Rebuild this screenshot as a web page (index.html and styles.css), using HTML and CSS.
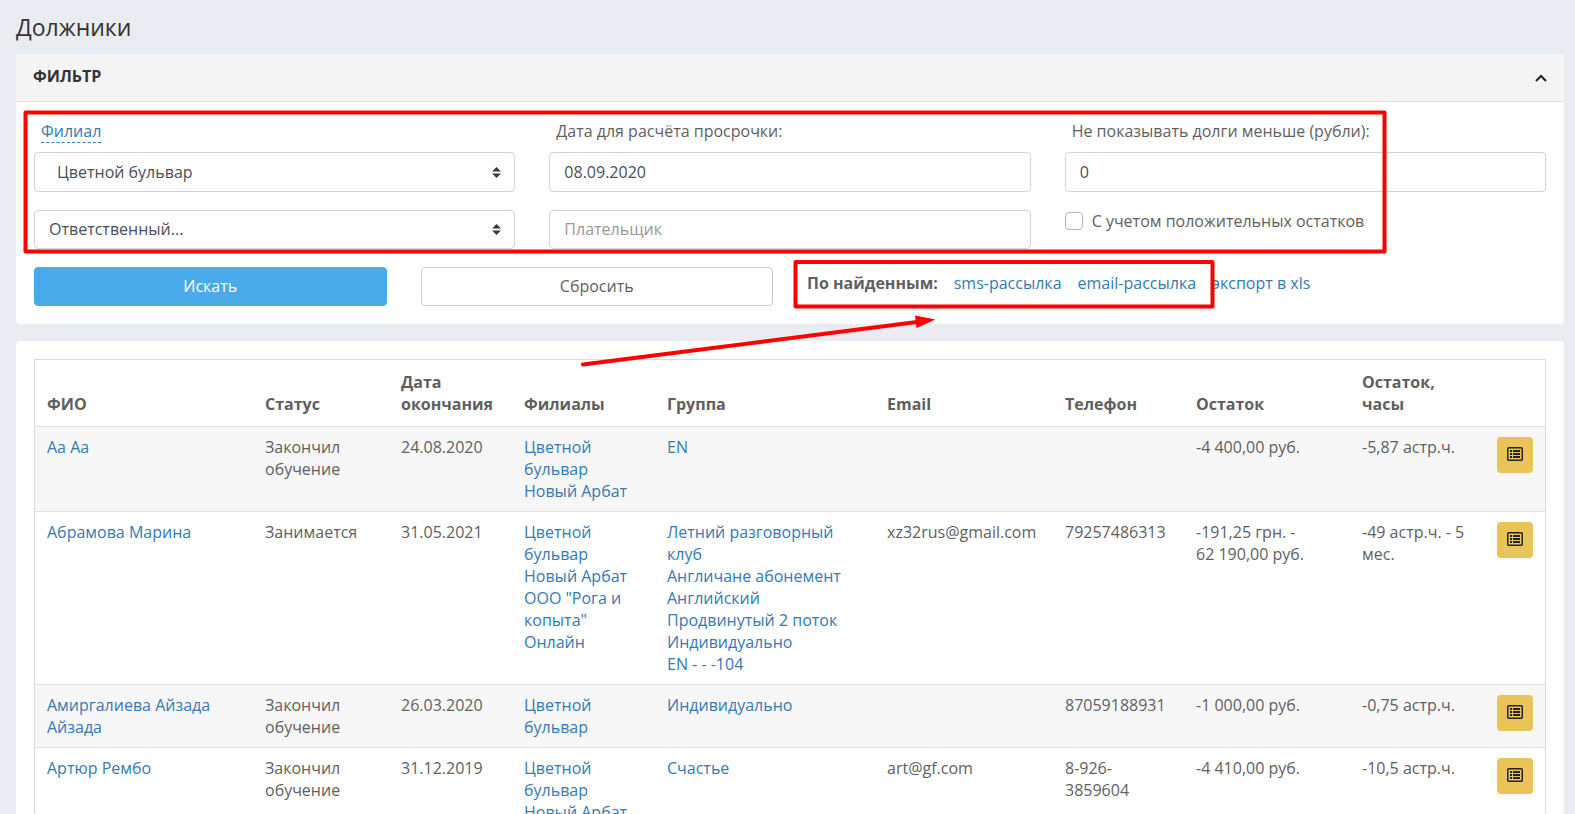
FILE: index.html
```html
<!DOCTYPE html>
<html lang="ru">
<head>
    <meta charset="UTF-8">
    <meta name="viewport" content="width=device-width, initial-scale=1.0">
    <title>Должники</title>
    <link rel="stylesheet" href="styles.css">
</head>
<body>
    <svg class="icon-defs" aria-hidden="true">
        <symbol id="icon-list" viewBox="0 0 16 14">
            <rect x="0.75" y="0.75" width="14.5" height="12.5" rx="1" fill="none" stroke="currentColor" stroke-width="1.5"/>
            <path fill="currentColor" d="M3 3h2v2H3zM6 3h7v2H6zM3 6h2v2H3zM6 6h7v2H6zM3 9h2v2H3zM6 9h7v2H6z"/>
        </symbol>
    </svg>

    <main class="page">
        <h1 class="page-title">Должники</h1>

        <!-- Фильтр -->
        <section class="card">
            <header class="card-header">
                <h2 class="card-title">Фильтр</h2>
                <button type="button" class="collapse-btn" aria-label="Свернуть">
                    <svg width="12" height="8" viewBox="0 0 12 8"><path d="M1 7l5-5 5 5" fill="none" stroke="currentColor" stroke-width="2"/></svg>
                </button>
            </header>
            <form class="filter">
                <div class="filter-fields">
                    <div class="field">
                        <label for="branch"><a href="#" class="dashed">Филиал</a></label>
                        <select id="branch" class="control select select-indent">
                            <option>Цветной бульвар</option>
                        </select>
                    </div>
                    <div class="field">
                        <label for="date">Дата для расчёта просрочки:</label>
                        <input type="text" id="date" class="control" value="08.09.2020">
                    </div>
                    <div class="field">
                        <label for="min-debt">Не показывать долги меньше (рубли):</label>
                        <input type="text" id="min-debt" class="control" value="0">
                    </div>
                    <select class="control control-low select" aria-label="Ответственный">
                        <option>Ответственный...</option>
                    </select>
                    <input type="text" class="control control-low" placeholder="Плательщик" aria-label="Плательщик">
                    <label class="check">
                        <input type="checkbox" class="check-box">
                        С учетом положительных остатков
                    </label>
                </div>
                <div class="filter-actions">
                    <button type="submit" class="btn btn-primary">Искать</button>
                    <button type="reset" class="btn">Сбросить</button>
                    <div class="found">
                        <b>По найденным:</b>
                        <a href="#">sms-рассылка</a>
                        <a href="#">email-рассылка</a>
                        <a href="#">экспорт в xls</a>
                    </div>
                </div>
            </form>
        </section>

        <!-- Список должников -->
        <section class="card card-table">
            <table class="debtors">
                <colgroup>
                    <col class="col-name">
                    <col class="col-status">
                    <col class="col-date">
                    <col class="col-branch">
                    <col class="col-group">
                    <col class="col-email">
                    <col class="col-phone">
                    <col class="col-balance">
                    <col class="col-hours">
                    <col class="col-action">
                </colgroup>
                <thead>
                    <tr>
                        <th>ФИО</th>
                        <th>Статус</th>
                        <th>Дата окончания</th>
                        <th>Филиалы</th>
                        <th>Группа</th>
                        <th>Email</th>
                        <th>Телефон</th>
                        <th>Остаток</th>
                        <th>Остаток,<br>часы</th>
                        <th></th>
                    </tr>
                </thead>
                <tbody>
                    <tr>
                        <td><a href="#">Аа Аа</a></td>
                        <td>Закончил обучение</td>
                        <td>24.08.2020</td>
                        <td><a href="#">Цветной бульвар</a><br><a href="#">Новый Арбат</a></td>
                        <td><a href="#">EN</a></td>
                        <td></td>
                        <td></td>
                        <td>-4&nbsp;400,00&nbsp;руб.</td>
                        <td>-5,87 астр.ч.</td>
                        <td><button type="button" class="btn-icon" aria-label="Подробнее"><svg width="16" height="14"><use href="#icon-list"/></svg></button></td>
                    </tr>
                    <tr>
                        <td><a href="#">Абрамова Марина</a></td>
                        <td>Занимается</td>
                        <td>31.05.2021</td>
                        <td><a href="#">Цветной бульвар</a><br><a href="#">Новый Арбат</a><br><a href="#">ООО "Рога и копыта"</a><br><a href="#">Онлайн</a></td>
                        <td><a href="#">Летний разговорный клуб</a><br><a href="#">Англичане абонемент</a><br><a href="#">Английский<br>Продвинутый 2 поток</a><br><a href="#">Индивидуально</a><br><a href="#">EN - - -104</a></td>
                        <td>xz32rus@gmail.com</td>
                        <td>79257486313</td>
                        <td>-191,25&nbsp;грн. - 62&nbsp;190,00&nbsp;руб.</td>
                        <td>-49 астр.ч. - 5 мес.</td>
                        <td><button type="button" class="btn-icon" aria-label="Подробнее"><svg width="16" height="14"><use href="#icon-list"/></svg></button></td>
                    </tr>
                    <tr>
                        <td><a href="#">Амиргалиева Айзада Айзада</a></td>
                        <td>Закончил обучение</td>
                        <td>26.03.2020</td>
                        <td><a href="#">Цветной бульвар</a></td>
                        <td><a href="#">Индивидуально</a></td>
                        <td></td>
                        <td>87059188931</td>
                        <td>-1&nbsp;000,00&nbsp;руб.</td>
                        <td>-0,75 астр.ч.</td>
                        <td><button type="button" class="btn-icon" aria-label="Подробнее"><svg width="16" height="14"><use href="#icon-list"/></svg></button></td>
                    </tr>
                    <tr>
                        <td><a href="#">Артюр Рембо</a></td>
                        <td>Закончил обучение</td>
                        <td>31.12.2019</td>
                        <td><a href="#">Цветной бульвар</a><br><a href="#">Новый Арбат</a></td>
                        <td><a href="#">Счастье</a></td>
                        <td>art@gf.com</td>
                        <td>8-926-3859604</td>
                        <td>-4&nbsp;410,00&nbsp;руб.</td>
                        <td>-10,5 астр.ч.</td>
                        <td><button type="button" class="btn-icon" aria-label="Подробнее"><svg width="16" height="14"><use href="#icon-list"/></svg></button></td>
                    </tr>
                </tbody>
            </table>
        </section>
    </main>

    <!-- Красные пометки поверх страницы -->
    <svg class="marks" width="1575" height="380" viewBox="0 0 1575 380" aria-hidden="true">
        <g fill="none" stroke="#ff0000" stroke-width="4" stroke-linejoin="round" stroke-linecap="round">
            <rect x="25.5" y="112.5" width="1359" height="139"/>
            <rect x="795.5" y="262" width="417" height="44.5"/>
            <path d="M583 364.5L917 322"/>
        </g>
        <path fill="#ff0000" d="M915 315.5L935.5 319.5L916.5 328z"/>
    </svg>
</body>
</html>
```
FILE: styles.css
```css
* {
    margin: 0;
    padding: 0;
    box-sizing: border-box;
}

body {
    font-family: 'Open Sans', sans-serif;
    font-size: 16px;
    line-height: 22px;
    color: #5f5f5f;
    background-color: #e9ecf1;
}

a {
    color: #337ab7;
    text-decoration: none;
}

.icon-defs {
    display: none;
}

.page {
    padding: 12px 11px 18px 16px;
}

.page-title {
    font-size: 23px;
    line-height: 30px;
    font-weight: 400;
    color: #333;
    margin-bottom: 12px;
}

/* Карточки */
.card {
    background-color: #fff;
    border-radius: 4px;
    margin-bottom: 17px;
}

.card-header {
    display: flex;
    justify-content: space-between;
    align-items: center;
    height: 48px;
    padding: 0 17px 4px;
    background-color: #f4f4f4;
    border-bottom: 1px solid #e0e1e3;
}

.card-title {
    font-size: 16px;
    font-weight: 700;
    color: #333;
    text-transform: uppercase;
}

.collapse-btn {
    display: flex;
    padding-top: 4px;
    border: none;
    background: none;
    color: #222;
    cursor: pointer;
}

/* Форма фильтра */
.filter {
    display: flex;
    flex-direction: column;
    gap: 18px;
    padding: 18px;
}

.filter-fields {
    display: grid;
    grid-template-columns: repeat(3, 1fr);
    gap: 18px 34px;
}

.field {
    display: flex;
    flex-direction: column;
    gap: 10px;
}

.field label {
    height: 22px;
    padding-left: 7px;
}

.dashed {
    display: inline-block;
    border-bottom: 1px dashed #337ab7;
}

.control {
    width: 100%;
    height: 40px;
    padding: 0 14px;
    font: inherit;
    color: #495057;
    background-color: #fff;
    border: 1px solid #ced4da;
    border-radius: 4px;
    outline: none;
}

.control-low {
    height: 39px;
    padding-bottom: 2px;
}

.control:focus {
    border-color: #4aa9e9;
}

.control::placeholder {
    color: #999;
}

.select {
    appearance: none;
    background-image: url("data:image/svg+xml,%3Csvg xmlns='http://www.w3.org/2000/svg' viewBox='0 0 4 5'%3E%3Cpath fill='%23343a40' d='M2 0L0 2h4zm0 5L0 3h4z'/%3E%3C/svg%3E");
    background-repeat: no-repeat;
    background-position: right 13px center;
    background-size: 9px 11px;
}

.select-indent {
    padding-left: 22px;
}

.check {
    display: flex;
    align-self: start;
    align-items: center;
    gap: 9px;
}

.check-box {
    appearance: none;
    width: 18px;
    height: 18px;
    background-color: #fff;
    border: 1px solid #adb5bd;
    border-radius: 4px;
}

.check-box:checked {
    background-color: #4aa9e9;
}

.filter-actions {
    display: grid;
    grid-template-columns: repeat(4, 1fr);
    gap: 34px;
}

.btn {
    height: 39px;
    padding-bottom: 2px;
    font: inherit;
    color: #5f5f5f;
    background-color: #fff;
    border: 1px solid #ccc;
    border-radius: 4px;
    cursor: pointer;
}

.btn-primary {
    color: #fff;
    background-color: #4aa9e9;
    border-color: #4aa9e9;
}

.found {
    display: flex;
    grid-column: span 2;
    gap: 16px;
    padding-top: 5px;
}

/* Таблица */
.card-table {
    padding: 18px;
}

.debtors {
    width: 100%;
    table-layout: fixed;
    border-collapse: separate;
    border-spacing: 0;
    border: 1px solid #d9dadc;
}

.debtors th {
    padding: 11px 12px;
    font-weight: 700;
    text-align: left;
    vertical-align: bottom;
}

.debtors td {
    padding: 9px 12px;
    vertical-align: top;
    border-top: 1px solid #dee0e3;
}

.debtors tbody tr:nth-child(odd) {
    background-color: #f7f7f7;
}

.col-name { width: 218px; }
.col-status { width: 136px; }
.col-date { width: 123px; }
.col-branch { width: 143px; }
.col-group { width: 220px; }
.col-email { width: 178px; }
.col-phone { width: 131px; }
.col-balance { width: 166px; }
.col-hours { width: 135px; }
.col-action { width: 60px; }

.btn-icon {
    display: flex;
    justify-content: center;
    width: 36px;
    height: 36px;
    margin-top: 1px;
    padding-top: 10px;
    color: #222;
    background-color: #eac459;
    border: none;
    border-radius: 4px;
    cursor: pointer;
}

.marks {
    position: absolute;
    top: 0;
    left: 0;
    pointer-events: none;
}
```
